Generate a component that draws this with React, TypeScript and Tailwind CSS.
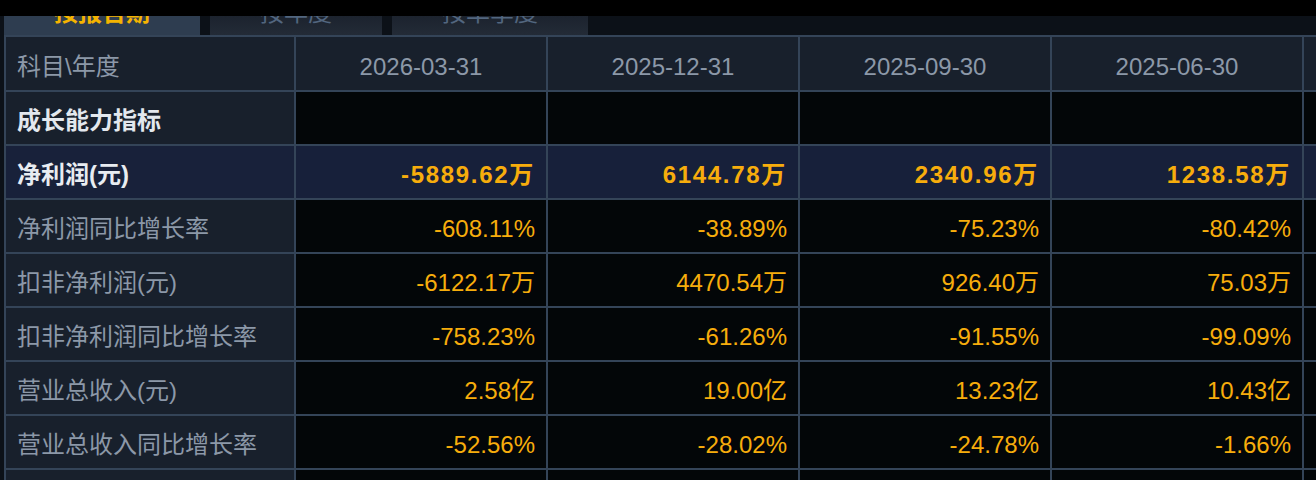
import React from "react";

const FONT = { fontFamily: '"Liberation Sans", "Noto Sans CJK SC", sans-serif' };

type Row = { label: string; values: string[]; kind: "section" | "hl" | "normal" };

const rows: Row[] = [
  { label: "成长能力指标", values: ["", "", "", "", ""], kind: "section" },
  { label: "净利润(元)", values: ["-5889.62万", "6144.78万", "2340.96万", "1238.58万", "3516.32万"], kind: "hl" },
  { label: "净利润同比增长率", values: ["-608.11%", "-38.89%", "-75.23%", "-80.42%", "-12.30%"], kind: "normal" },
  { label: "扣非净利润(元)", values: ["-6122.17万", "4470.54万", "926.40万", "75.03万", "1201.11万"], kind: "normal" },
  { label: "扣非净利润同比增长率", values: ["-758.23%", "-61.26%", "-91.55%", "-99.09%", "-20.14%"], kind: "normal" },
  { label: "营业总收入(元)", values: ["2.58亿", "19.00亿", "13.23亿", "10.43亿", "5.44亿"], kind: "normal" },
  { label: "营业总收入同比增长率", values: ["-52.56%", "-28.02%", "-24.78%", "-1.66%", "-3.02%"], kind: "normal" },
  { label: "", values: ["", "", "", "", ""], kind: "normal" },
];

const dates = ["2026-03-31", "2025-12-31", "2025-09-30", "2025-06-30", "2025-03-31"];

export default function App() {
  return (
    <div className="w-[1316px] h-[480px] overflow-hidden bg-[#0c1118]" style={FONT}>
      <div className="h-[16px] bg-black" />
      <div className="h-[19px] flex gap-[10px] pl-[4px] overflow-hidden">
        <div className="w-[196px] h-[19px] bg-[#2e3d50] flex justify-center overflow-hidden">
          <span className="text-[24px] leading-[24px] -mt-[15px] font-bold text-[#f5b400]">按报告期</span>
        </div>
        <div className="w-[172px] h-[19px] bg-gradient-to-b from-[#1c232e] to-[#232b37] flex justify-center overflow-hidden">
          <span className="text-[24px] leading-[24px] -mt-[15px] text-[#52667f]">按年度</span>
        </div>
        <div className="w-[196px] h-[19px] bg-gradient-to-b from-[#1c232e] to-[#232b37] flex justify-center overflow-hidden">
          <span className="text-[24px] leading-[24px] -mt-[15px] text-[#52667f]">按单季度</span>
        </div>
      </div>
      <div className="pl-[4px]">
        <div className="w-max grid grid-cols-[288px_repeat(5,250px)] grid-rows-[53px_repeat(8,52px)] gap-[2px] p-[2px] bg-[#344458]">
          <div className="bg-[#18202c] flex items-center pt-[6px] pl-[11px] text-[24px] text-[#8c98a8]">科目\年度</div>
          {dates.map((d) => (
            <div key={d} className="bg-[#18202c] flex items-center justify-center pt-[6px] text-[24px] text-[#8c98a8]">
              {d}
            </div>
          ))}
          {rows.map((r, i) => (
            <React.Fragment key={i}>
              <div
                className={
                  r.kind === "hl"
                    ? "bg-[#18213a] flex items-center pt-[6px] pl-[11px] text-[24px] font-bold text-[#e8ecf1]"
                    : r.kind === "section"
                    ? "bg-[#18202c] flex items-center pt-[6px] pl-[11px] text-[24px] font-bold text-[#e3e8ee]"
                    : "bg-[#18202c] flex items-center pt-[6px] pl-[11px] text-[24px] text-[#8c98a8]"
                }
              >
                {r.label}
              </div>
              {r.values.map((v, j) => (
                <div
                  key={j}
                  className={
                    r.kind === "hl"
                      ? "bg-[#17203a] flex items-center justify-end pt-[6px] pr-[11px] text-[24px] font-bold tracking-[1.7px] text-[#f7ad0c]"
                      : "bg-[#030608] flex items-center justify-end pt-[6px] pr-[11px] text-[24px] text-[#f7ad0c]"
                  }
                >
                  {v}
                </div>
              ))}
            </React.Fragment>
          ))}
        </div>
      </div>
    </div>
  );
}
